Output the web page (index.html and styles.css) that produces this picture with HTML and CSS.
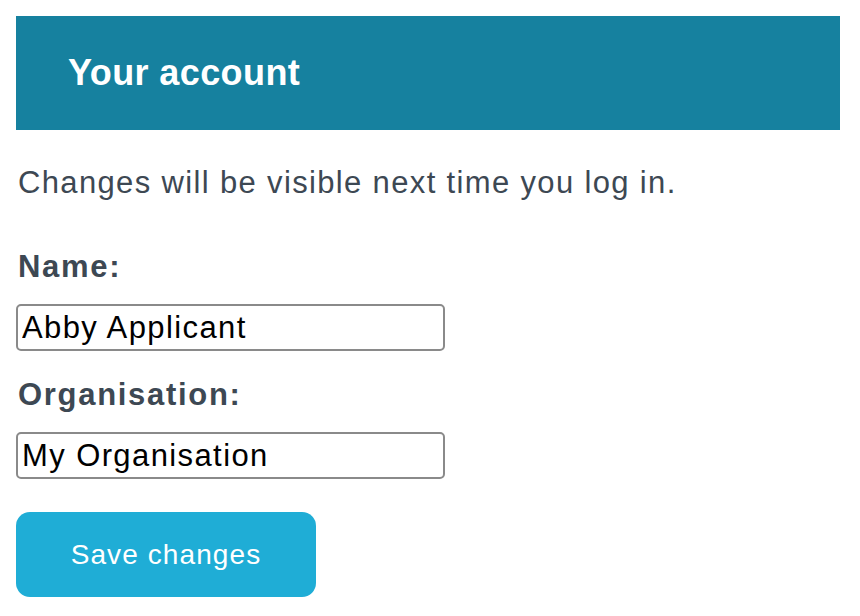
FILE: index.html
```html
<!DOCTYPE html>
<html lang="en">

<head>
    <meta charset="UTF-8">
    <meta name="viewport" content="width=device-width, initial-scale=1.0">
    <title>Your account</title>
    <link rel="stylesheet" href="styles.css">
</head>

<body>

    <header class="banner">
        <h1>Your account</h1>
    </header>

    <section class="account">
        <p class="note">Changes will be visible next time you log in.</p>

        <form class="account-form" action="" method="post">
            <label for="name">Name:</label>
            <input type="text" id="name" value="Abby Applicant" />

            <label for="org" class="org-label">Organisation:</label>
            <input type="text" id="org" value="My Organisation" />

            <button type="submit">Save changes</button>
        </form>
    </section>

</body>

</html>
```

FILE: styles.css
```css
body { margin: 16px 20px 16px 16px; font-family: "Liberation Sans", Arial, sans-serif; color: #3d4853; background: #fff; }
.banner { height: 114px; padding: 0 52px; background: #16819f; display: flex; align-items: center; }
.banner h1 { margin: 0; font-size: 36px; font-weight: bold; letter-spacing: 0.4px; color: #fff; }
.account .note { margin: 33px 0 0 2px; font-size: 31px; line-height: 40px; letter-spacing: 1.35px; }
.account-form { display: flex; flex-direction: column; align-items: flex-start; }
.account-form label { margin: 44px 0 0 2px; font-size: 31px; font-weight: bold; line-height: 40px; letter-spacing: 1.7px; }
.account-form .org-label { margin-top: 24px; }
.account-form input { margin-top: 17px; box-sizing: border-box; width: 429px; height: 47px; padding: 0 4px; font-family: "Liberation Sans", Arial, sans-serif; font-size: 31px; letter-spacing: 1.4px; color: #000; border: 2px solid #8a8a8a; border-radius: 5px; }
.account-form button { margin-top: 33px; width: 300px; height: 85px; font-family: "Liberation Sans", Arial, sans-serif; font-size: 28px; letter-spacing: 1.1px; color: #fff; background: #1fadd6; border: none; border-radius: 14px; }
```
